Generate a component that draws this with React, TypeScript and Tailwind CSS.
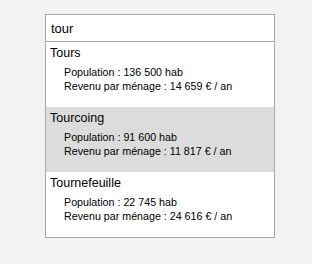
const cities = [
  { name: 'Tours', pop: '136 500', rev: '14 659' },
  { name: 'Tourcoing', pop: '91 600', rev: '11 817' },
  { name: 'Tournefeuille', pop: '22 745', rev: '24 616' },
];

export default function App() {
  const active = 1;
  return (
    <div className="min-h-[264px] bg-[#f2f2f2] pt-[14px] pl-[45px] font-['Liberation_Sans',Arial,sans-serif] text-black">
      <div className="w-[230px] border border-[#a9a9a9] bg-white">
        <div className="h-[27px] border-b border-[#a9a9a9] pl-[5px] pt-[2px] text-[13px] leading-[24px]">tour</div>
        {cities.map((c, i) => (
          <div key={c.name} className={`pl-[4px] pt-[4px] pb-[14px] ${i === active ? 'bg-[#dcdcdc]' : ''}`}>
            <div className="text-[12.5px] leading-[14px]">{c.name}</div>
            <div className="ml-[14px] mt-[5px] text-[10.7px] leading-[14px]">
              <div>Population : {c.pop} hab</div>
              <div>Revenu par ménage : {c.rev} € / an</div>
            </div>
          </div>
        ))}
      </div>
    </div>
  );
}
